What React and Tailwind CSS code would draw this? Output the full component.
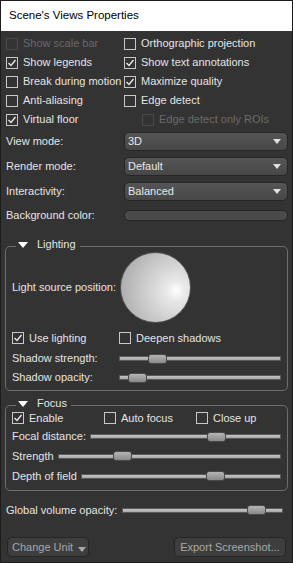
import React from 'react';

const Check = ({ checked, disabled }) => (
  <span
    className={`flex h-[12px] w-[12px] shrink-0 items-center justify-center border ${
      disabled ? 'border-[#4a4a4a]' : 'border-[#c8c8c8]'
    } bg-[#333333]`}
  >
    {checked && (
      <svg width="10" height="10" viewBox="0 0 10 10">
        <path d="M1.5 5 L4 7.5 L8.5 2" fill="none" stroke="#e8e8e8" strokeWidth="1.4" />
      </svg>
    )}
  </span>
);

const CheckItem = ({ label, checked, disabled, className = '' }) => (
  <div className={`flex items-center gap-[5px] ${className}`}>
    <Check checked={checked} disabled={disabled} />
    <span className={disabled ? 'text-[#6a6a6a]' : 'text-[#e4e4e4]'}>{label}</span>
  </div>
);

const Select = ({ value }) => (
  <div className="flex h-[19px] flex-1 items-center justify-between rounded-[5px] border border-[#262626] bg-gradient-to-b from-[#555555] to-[#474747] pl-[3px] pr-[6px] text-[#e8e8e8]">
    <span>{value}</span>
    <svg width="8" height="5" viewBox="0 0 8 5">
      <path d="M0 0 H8 L4 5 Z" fill="#e0e0e0" />
    </svg>
  </div>
);

const Slider = ({ pos, className = '' }) => (
  <div className={`relative flex h-[12px] flex-1 items-center ${className}`}>
    <div className="h-[5px] w-full border border-[#5a5a5a] bg-gradient-to-b from-[#c4c4c4] to-[#a8a8a8]" />
    <div
      className="absolute top-[1px] h-[10px] w-[19px] rounded-[3px] border border-[#4a4a4a] bg-gradient-to-b from-[#b4b4b4] to-[#8a8a8a]"
      style={{ left: `${pos}px` }}
    />
  </div>
);

const GroupTitle = ({ title }) => (
  <div className="absolute left-[10px] top-[-8px] flex items-center gap-[9px] bg-[#333333] px-[2px]">
    <svg width="10" height="6" viewBox="0 0 10 6">
      <path d="M0 0 H10 L5 6 Z" fill="#ffffff" />
    </svg>
    <span className="pr-[2px] text-[#e4e4e4]">{title}</span>
  </div>
);

export default function App() {
  return (
    <div
      className="flex h-[563px] w-[293px] flex-col border border-[#1c1c1c] bg-[#333333] text-[11px] leading-none"
      style={{ fontFamily: '"Liberation Sans", Arial, sans-serif' }}
    >
      <div className="flex h-[30px] shrink-0 items-center bg-white pl-[8px] text-[11.5px] text-black">
        Scene's Views Properties
      </div>

      <div className="grid grid-cols-[118px_1fr] pl-[5px] pt-[3px]">
        <CheckItem className="h-[19px]" label="Show scale bar" disabled />
        <CheckItem className="h-[19px]" label="Orthographic projection" />
        <CheckItem className="h-[19px]" label="Show legends" checked />
        <CheckItem className="h-[19px]" label="Show text annotations" checked />
        <CheckItem className="h-[19px]" label="Break during motion" />
        <CheckItem className="h-[19px]" label="Maximize quality" checked />
        <CheckItem className="h-[19px]" label="Anti-aliasing" />
        <CheckItem className="h-[19px]" label="Edge detect" />
        <CheckItem className="h-[19px]" label="Virtual floor" checked />
        <CheckItem className="h-[19px] pl-[18px]" label="Edge detect only ROIs" disabled />
      </div>

      <div className="mt-[3px] flex flex-col gap-[6px] pl-[5px] pr-[4px] text-[#e4e4e4]">
        <div className="flex items-center">
          <span className="w-[118px]">View mode:</span>
          <Select value="3D" />
        </div>
        <div className="flex items-center">
          <span className="w-[118px]">Render mode:</span>
          <Select value="Default" />
        </div>
        <div className="flex items-center">
          <span className="w-[118px]">Interactivity:</span>
          <Select value="Balanced" />
        </div>
        <div className="flex h-[17px] items-center">
          <span className="w-[118px]">Background color:</span>
          <div className="h-[11px] flex-1 rounded-[5px] border border-[#262626] bg-[#4a4a4a]" />
        </div>
      </div>

      <div className="relative mx-[4px] mt-[22px] h-[145px] shrink-0 rounded-[5px] border border-[#6e6e6e] px-[6px]">
        <GroupTitle title="Lighting" />
        <div className="mt-[5px] flex items-center text-[#e4e4e4]">
          <span className="w-[108px]">Light source position:</span>
          <div
            className="h-[71px] w-[71px] rounded-full border border-[#555555]"
            style={{ background: 'radial-gradient(circle at 80% 55%, #ffffff 0%, #e8e8e8 15%, #c6c6c6 55%, #a0a0a0 100%)' }}
          />
        </div>
        <div className="mt-[7px] flex h-[16px] items-center">
          <CheckItem className="w-[107px]" label="Use lighting" checked />
          <CheckItem label="Deepen shadows" />
        </div>
        <div className="mt-[3px] flex h-[19px] items-center text-[#e4e4e4]">
          <span className="w-[107px]">Shadow strength:</span>
          <Slider pos={29} />
        </div>
        <div className="flex h-[19px] items-center text-[#e4e4e4]">
          <span className="w-[107px]">Shadow opacity:</span>
          <Slider pos={9} />
        </div>
      </div>

      <div className="relative mx-[4px] mt-[14px] h-[86px] shrink-0 rounded-[5px] border border-[#6e6e6e] px-[6px]">
        <GroupTitle title="Focus" />
        <div className="mt-[4px] flex h-[16px] items-center">
          <CheckItem className="w-[92px]" label="Enable" checked />
          <CheckItem className="w-[92px]" label="Auto focus" />
          <CheckItem label="Close up" />
        </div>
        <div className="mt-[1px] flex h-[19px] items-center gap-[4px] text-[#e4e4e4]">
          <span>Focal distance:</span>
          <Slider pos={117} />
        </div>
        <div className="flex h-[20px] items-center gap-[4px] text-[#e4e4e4]">
          <span>Strength</span>
          <Slider pos={55} />
        </div>
        <div className="flex h-[20px] items-center gap-[4px] text-[#e4e4e4]">
          <span>Depth of field</span>
          <Slider pos={125} />
        </div>
      </div>

      <div className="mt-[10px] flex h-[18px] items-center gap-[5px] pl-[5px] pr-[9px] text-[#e4e4e4]">
        <span>Global volume opacity:</span>
        <Slider pos={125} />
      </div>

      <div className="mt-[18px] flex items-center justify-between px-[6px]">
        <div className="flex h-[20px] w-[82px] items-center gap-[5px] rounded-[5px] border border-[#262626] bg-[#3e3e3e] pl-[4px] text-[#a8a8a8]">
          <span>Change Unit</span>
          <svg width="8" height="5" viewBox="0 0 8 5" className="mt-[4px]">
            <path d="M0 0 H8 L4 5 Z" fill="#a8a8a8" />
          </svg>
        </div>
        <div className="flex h-[20px] w-[112px] items-center justify-center rounded-[5px] border border-[#262626] bg-[#3e3e3e] text-[#a8a8a8]">
          Export Screenshot...
        </div>
      </div>
    </div>
  );
}
